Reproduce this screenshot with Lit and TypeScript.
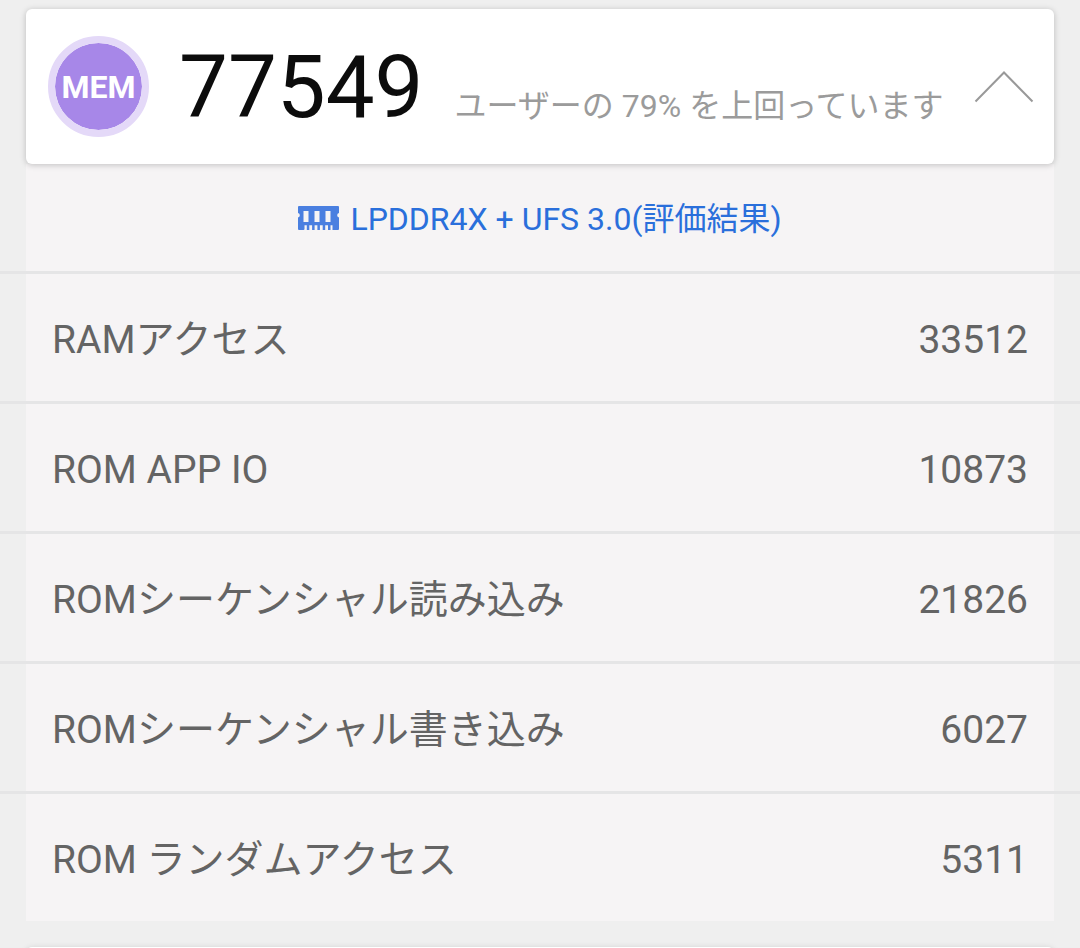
import { LitElement, html, css, nothing } from "lit";
import { customElement, state } from "lit/decorators.js";

interface Result {
  label: string;
  score: number;
}

const RESULTS: Result[] = [
  { label: "RAMアクセス", score: 33512 },
  { label: "ROM APP IO", score: 10873 },
  { label: "ROMシーケンシャル読み込み", score: 21826 },
  { label: "ROMシーケンシャル書き込み", score: 6027 },
  { label: "ROM ランダムアクセス", score: 5311 },
];

@customElement("app-root")
export class AppRoot extends LitElement {
  static styles = css`
    :host {
      display: block;
      box-sizing: border-box;
      min-height: 100vh;
      padding-top: 9px;
      overflow: hidden;
      background: #efefef;
      color: #646464;
      font-family: Roboto, "Noto Sans CJK JP", sans-serif;
    }
    .card {
      display: flex;
      align-items: center;
      box-sizing: border-box;
      min-height: 155px;
      margin: 0 26px;
      padding: 0 16px 0 22px;
      border-radius: 6px;
      background: #fff;
      box-shadow: 0 1px 6px rgba(0, 0, 0, 0.22);
      position: relative;
    }
    .badge {
      display: flex;
      flex: none;
      align-items: center;
      justify-content: center;
      width: 87px;
      height: 87px;
      border: 7px solid #e4d9f8;
      border-radius: 50%;
      background: #a787e8;
      background-clip: padding-box;
      color: #fff;
      font-size: 32px;
      font-weight: 700;
      line-height: 40px;
    }
    .summary {
      display: flex;
      flex: 1;
      align-items: baseline;
      gap: 31px;
      margin-left: 30px;
      white-space: nowrap;
    }
    .total {
      color: #0c0c0c;
      font-size: 87px;
      line-height: 104px;
    }
    .rank {
      color: #9b9b9b;
      font-size: 32px;
      line-height: 40px;
    }
    .toggle {
      display: flex;
      margin: 0;
      padding: 4px;
      border: 0;
      background: none;
      cursor: pointer;
    }
    .toggle svg {
      width: 60px;
      height: 32px;
    }
    .collapsed svg {
      transform: rotate(180deg);
    }
    .details {
      background: linear-gradient(#f6f4f5, #f6f4f5) center / calc(100% - 52px) 100% no-repeat;
    }
    .spec {
      display: flex;
      align-items: center;
      justify-content: center;
      gap: 11px;
      box-sizing: border-box;
      height: 107px;
      margin: 0;
      padding-top: 2px;
      color: #2a6fdb;
      font-size: 32px;
      font-weight: 400;
      line-height: 48px;
    }
    .spec svg {
      flex: none;
      width: 41px;
      height: 25px;
    }
    table {
      width: 100%;
      border-collapse: separate;
      border-spacing: 0;
      font-size: 39px;
      line-height: 56px;
    }
    th,
    td {
      height: 123px;
      padding: 4px 0 0;
      border-top: 3px solid #e5e5e6;
      font-weight: 400;
    }
    th {
      padding-left: 52px;
      text-align: left;
    }
    td {
      padding-right: 52px;
      text-align: right;
    }
    .next {
      min-height: 155px;
      margin: 26px 26px -154px;
      border-radius: 6px;
      background: #fff;
      box-shadow: 0 1px 6px rgba(0, 0, 0, 0.15);
    }
  `;

  @state() private open = true;

  private toggle() {
    this.open = !this.open;
  }

  private renderDetails() {
    return html`
      <section class="details" id="details">
        <h2 class="spec">
          <svg viewBox="0 0 41 25" aria-hidden="true">
            <path
              fill="#4a7fe0"
              fill-rule="evenodd"
              d="M1 0H40Q41 0 41 1V7A2.300 2.300 0 0 0 41 11.500V23Q41 24 40 24H34.500V19.300H32.500V24H30V19.300H27.200V24H24.700V19.300H21.900V24H19.400V19.300H16.600V24H14.100V19.300H11.300V24H8.800V19.300H6.500V23Q6.500 24 5.500 24H1Q0 24 0 23V11.500A2.300 2.300 0 0 0 0 7V1Q0 0 1 0ZM5.500 5V16H10.500V5ZM16.500 5V16H21.500V5ZM27.500 5V16H32.500V5Z"
            />
          </svg>
          <span>LPDDR4X + UFS 3.0(評価結果)</span>
        </h2>
        <table>
          <tbody>
            ${RESULTS.map(
              (r) => html`<tr>
                <th scope="row">${r.label}</th>
                <td>${r.score}</td>
              </tr>`
            )}
          </tbody>
        </table>
      </section>
    `;
  }

  render() {
    return html`
      <header class="card">
        <span class="badge">MEM</span>
        <div class="summary">
          <span class="total">77549</span>
          <span class="rank">ユーザーの 79% を上回っています</span>
        </div>
        <button
          class="toggle ${this.open ? "" : "collapsed"}"
          type="button"
          aria-label="詳細"
          aria-expanded=${this.open}
          aria-controls="details"
          @click=${this.toggle}
        >
          <svg viewBox="0 0 60 32" fill="none" stroke="#999" stroke-width="2" aria-hidden="true">
            <path d="M1.500 30.500L30 1.500L58.500 30.500" />
          </svg>
        </button>
      </header>
      ${this.open ? this.renderDetails() : nothing}
      <div class="next"></div>
    `;
  }
}
